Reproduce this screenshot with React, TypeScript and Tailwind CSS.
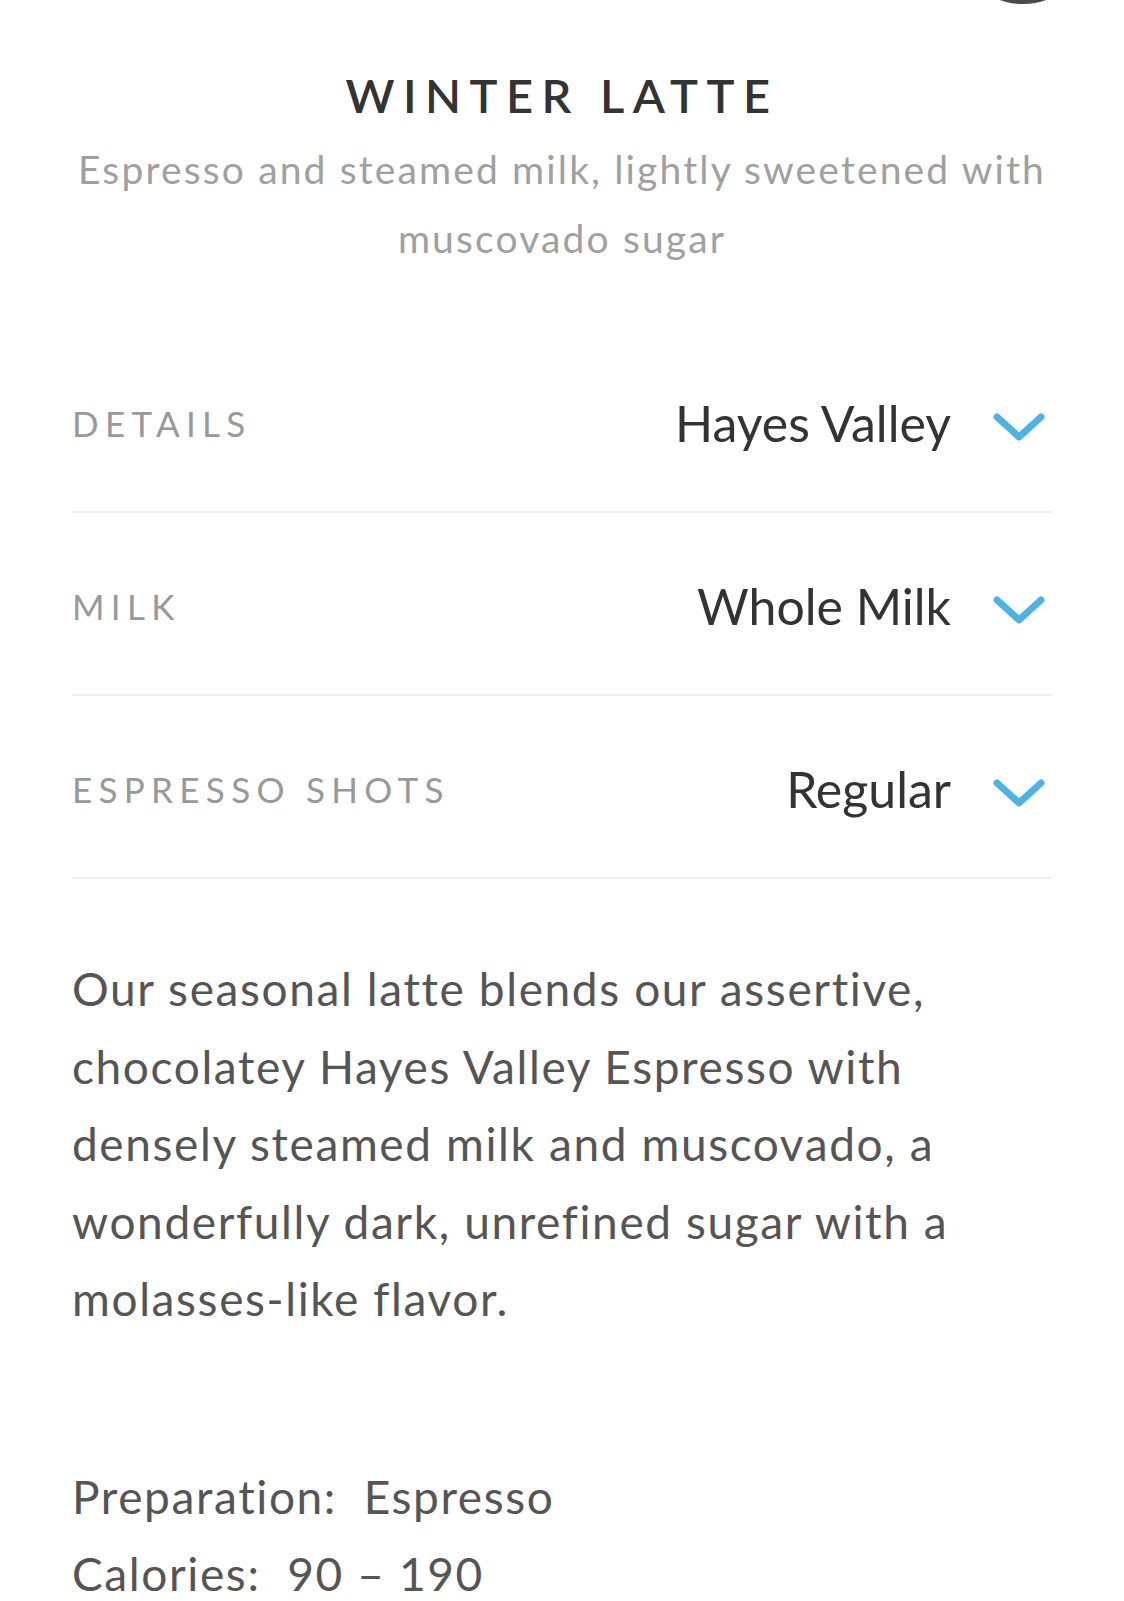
const font = { fontFamily: "Lato, 'Open Sans', sans-serif" }

const options = [
  { label: "Details", value: "Hayes Valley" },
  { label: "Milk", value: "Whole Milk" },
  { label: "Espresso Shots", value: "Regular" },
]

export default function App() {
  return (
    <main className="relative min-h-screen overflow-hidden bg-white" style={font}>
      {/* close button peeking in from the top */}
      <div className="absolute -top-[136px] left-[953px] h-[140px] w-[140px] rounded-full bg-[#4a4a4a]" />

      <div className="px-[72px] pt-[67px] pb-10">
        {/* Header */}
        <h1 className="text-center text-[47px] font-semibold uppercase leading-[56px] tracking-[0.18em] text-[#333]">
          Winter Latte
        </h1>
        <p className="mt-[12px] text-center text-[39px] leading-[69px] tracking-[0.055em] text-[#a0a0a0]">
          Espresso and steamed milk, lightly sweetened with muscovado sugar
        </p>

        {/* Options */}
        <div className="mt-[57px]">
          {options.map((opt) => (
            <OptionRow key={opt.label} label={opt.label} value={opt.value} />
          ))}
        </div>

        {/* Description */}
        <p className="mt-[71px] text-[46px] leading-[77.6px] tracking-[0.035em] text-[#555]">
          Our seasonal latte blends our assertive, chocolatey Hayes Valley
          Espresso with densely steamed milk and muscovado, a wonderfully dark,
          unrefined sugar with a molasses-like flavor.
        </p>

        <div className="mt-[120px] text-[46px] leading-[77px] tracking-[0.035em] text-[#555]">
          <p>
            Preparation:&nbsp; Espresso
          </p>
          <p>
            Calories:&nbsp; 90 – 190
          </p>
        </div>
      </div>
    </main>
  )
}

function OptionRow({ label, value }: { label: string; value: string }) {
  return (
    <div className="flex h-[183px] items-center justify-between border-b-2 border-[#f0f0f0] pt-[6px]">
      <span className="text-[35px] uppercase tracking-[0.18em] text-[#999]">
        {label}
      </span>
      <div className="flex items-center gap-[41px]">
        <span className="text-[50px] text-[#333]">{value}</span>
        <Chevron />
      </div>
    </div>
  )
}

function Chevron() {
  return (
    <svg width="54" height="30" viewBox="0 0 54 30" fill="none" className="mr-[6px] mt-[6px]">
      <polyline
        points="5,5 27,25 49,5"
        stroke="#4db3e3"
        strokeWidth="7"
        strokeLinecap="round"
        strokeLinejoin="round"
      />
    </svg>
  )
}
